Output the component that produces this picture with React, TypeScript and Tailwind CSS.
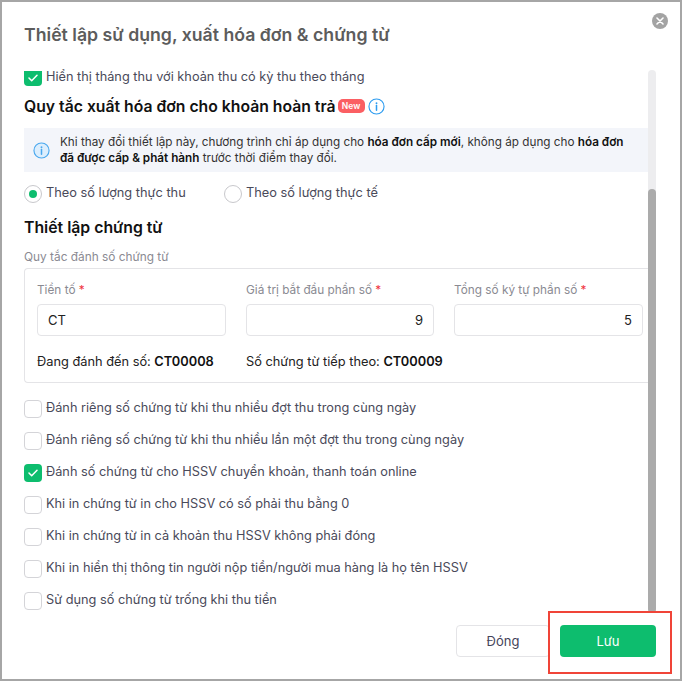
const FONT = "font-['Inter','Noto_Sans',sans-serif]";

function Check({ checked = false, clipped = false }: { checked?: boolean; clipped?: boolean }) {
  if (checked) {
    return (
      <span className={`flex w-[18px] shrink-0 items-center justify-center bg-[#0dbd6e] ${clipped ? "h-[15px] rounded-b-[4px]" : "h-[18px] rounded-[4px]"}`}>
        <svg width="10" height="8" viewBox="0 0 10 8" fill="none">
          <path d="M1 4l2.7 2.7L9 1.3" stroke="#fff" strokeWidth="1.5" strokeLinecap="round" strokeLinejoin="round" />
        </svg>
      </span>
    );
  }
  return <span className="h-[18px] w-[18px] shrink-0 rounded-[4px] border border-[#d4d4d8] bg-white" />;
}

function CheckRow({ label, checked = false }: { label: string; checked?: boolean }) {
  return (
    <div className="flex h-[18px] items-center gap-1 text-[12.75px] text-[#4a4a5a]">
      <Check checked={checked} />
      <span className="-translate-y-[2px] whitespace-nowrap">{label}</span>
    </div>
  );
}

function InfoIcon({ size, stroke, fill = "none" }: { size: number; stroke: string; fill?: string }) {
  return (
    <svg width={size} height={size} viewBox="0 0 18 18" fill="none" className="shrink-0">
      <circle cx="9" cy="9" r="8" stroke={stroke} strokeWidth="1.2" fill={fill} />
      <circle cx="9" cy="5.6" r="1" fill={stroke} />
      <path d="M9 8v5" stroke={stroke} strokeWidth="1.6" strokeLinecap="round" />
    </svg>
  );
}

function Radio({ label, checked = false }: { label: string; checked?: boolean }) {
  return (
    <div className="flex items-center gap-1 text-[12.8px] text-[#4a4a5a]">
      <span className="flex h-[18px] w-[18px] items-center justify-center rounded-full border border-[#c8c8cc] bg-white">
        {checked && <span className="h-[8px] w-[8px] rounded-full bg-[#0dbd6e]" />}
      </span>
      <span className="-translate-y-px whitespace-nowrap">{label}</span>
    </div>
  );
}

function Field({ label, value, right = false, width }: { label: string; value: string; right?: boolean; width: string }) {
  return (
    <div className={`flex flex-col ${width}`}>
      <div className="h-[16px] whitespace-nowrap text-[11.8px] leading-[16px] text-[#8a8a92]">
        {label} <span className="text-[#ef3340]">*</span>
      </div>
      <div className={`mt-[6px] flex h-[32px] items-center rounded-[4px] border border-[#e4e4e7] px-[10px] pt-px text-[13px] text-[#222] ${right ? "justify-end" : ""}`}>
        {value}
      </div>
    </div>
  );
}

export default function App() {
  return (
    <div className={`${FONT} relative flex h-[681px] w-[682px] flex-col border-2 border-[#a6a6a6] bg-white`}>
      <div className="flex h-[68px] shrink-0 items-start pl-[22px] pt-[22px]">
        <h1 className="text-[17.7px] font-semibold leading-[22px] text-[#5c5c5c]">Thiết lập sử dụng, xuất hóa đơn &amp; chứng từ</h1>
      </div>

      <div className="flex h-[543px] shrink-0 pl-[22px]">
        <div className="w-[624px] shrink-0">
          <div className="flex h-[16px] items-center gap-1 text-[12.75px] text-[#4a4a5a]">
            <Check checked clipped />
            <span className="-translate-y-px whitespace-nowrap">Hiển thị tháng thu với khoản thu có kỳ thu theo tháng</span>
          </div>

          <div className="mt-[11px] flex h-[20px] items-center">
            <h2 className="whitespace-nowrap text-[15.75px] font-semibold leading-[20px] text-[#111]">Quy tắc xuất hóa đơn cho khoản hoàn trả</h2>
            <span className="ml-[2px] flex h-[14px] w-[27px] -translate-y-[1px] items-center justify-center rounded-[5px] bg-[#fb5f63] text-[8.5px] font-semibold text-white">New</span>
            <span className="ml-[3px] flex -translate-y-[1px]"><InfoIcon size={17} stroke="#2d9cf0" /></span>
          </div>

          <div className="mt-[11px] flex h-[44px] items-center gap-[10px] bg-[#f3f5fa] pl-[9px] text-[11.72px] leading-[16px] text-[#333]">
            <InfoIcon size={17} stroke="#4aa8ee" fill="#dceefd" />
            <p className="w-[572px]">
              Khi thay đổi thiết lập này, chương trình chỉ áp dụng cho <b className="font-semibold text-[#111]">hóa đơn cấp mới</b>, không áp dụng cho <b className="font-semibold text-[#111]">hóa đơn đã được cấp &amp; phát hành</b> trước thời điểm thay đổi.
            </p>
          </div>

          <div className="mt-[12px] flex gap-[37px]">
            <div className="w-[163px]"><Radio checked label="Theo số lượng thực thu" /></div>
            <Radio label="Theo số lượng thực tế" />
          </div>

          <h2 className="mt-[15px] text-[15.8px] font-semibold leading-[20px] text-[#111]">Thiết lập chứng từ</h2>

          <div className="mt-[11px] h-[16px] text-[11.85px] leading-[16px] text-[#8a8a92]">Quy tắc đánh số chứng từ</div>

          <div className="mt-[3px] h-[115px] rounded-l-[4px] border border-r-0 border-[#e4e4e7] pl-[12px] pt-[13px]">
            <div className="flex gap-[20px]">
              <Field width="w-[189px]" label="Tiền tố" value="CT" />
              <Field width="w-[188px]" label="Giá trị bắt đầu phần số" value="9" right />
              <Field width="w-[189px]" label="Tổng số ký tự phần số" value="5" right />
            </div>
            <div className="mt-[18px] flex text-[12.8px] leading-[16px] text-[#222]">
              <div className="w-[209px]">Đang đánh đến số: <b className="font-semibold text-[#111]">CT00008</b></div>
              <div>Số chứng từ tiếp theo: <b className="font-semibold text-[#111]">CT00009</b></div>
            </div>
          </div>

          <div className="mt-[17px] flex flex-col gap-[14px]">
            <CheckRow label="Đánh riêng số chứng từ khi thu nhiều đợt thu trong cùng ngày" />
            <CheckRow label="Đánh riêng số chứng từ khi thu nhiều lần một đợt thu trong cùng ngày" />
            <CheckRow checked label="Đánh số chứng từ cho HSSV chuyển khoản, thanh toán online" />
            <CheckRow label="Khi in chứng từ in cho HSSV có số phải thu bằng 0" />
            <CheckRow label="Khi in chứng từ in cả khoản thu HSSV không phải đóng" />
            <CheckRow label="Khi in hiển thị thông tin người nộp tiền/người mua hàng là họ tên HSSV" />
            <CheckRow label="Sử dụng số chứng từ trống khi thu tiền" />
          </div>
        </div>

        <div className="flex w-[8px] shrink-0 flex-col rounded-t-[4px] bg-[#ededef]">
          <div className="mt-[119px] flex-1 rounded-[4px] bg-[#ababab]" />
        </div>
      </div>

      <div className="mt-[12px] flex justify-end gap-[10px] pr-[24px]">
        <button className="h-[32px] w-[94px] rounded-[4px] border border-[#e4e4e7] bg-white pt-px text-[13px] text-[#44445a]">Đóng</button>
        <button className="h-[32px] w-[96px] rounded-[4px] bg-[#0dbd6e] pt-px text-[13px] text-white">Lưu</button>
      </div>

      <button className="absolute right-[12px] top-[11px] flex h-[16px] w-[16px] items-center justify-center rounded-full bg-[#a3a3a3]">
        <svg width="8" height="8" viewBox="0 0 8 8" fill="none">
          <path d="M1 1l6 6M7 1L1 7" stroke="#fff" strokeWidth="1.6" strokeLinecap="round" />
        </svg>
      </button>

      <div className="pointer-events-none absolute left-[546px] top-[609px] h-[63px] w-[124px] border-2 border-[#f04438]" />
    </div>
  );
}
